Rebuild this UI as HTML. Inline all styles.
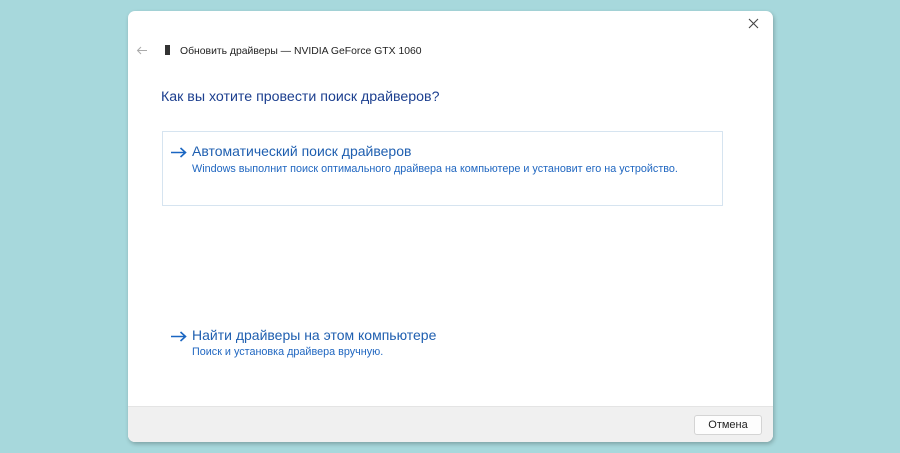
<!DOCTYPE html>
<html><head><meta charset="utf-8"><style>
*{margin:0;padding:0;box-sizing:border-box}
body{width:900px;height:453px;background:#a7d8dc;position:relative;overflow:hidden;font-family:"Liberation Sans","DejaVu Sans",sans-serif}
.dlg{position:absolute;left:128px;top:11px;width:645px;height:431px;background:#fff;border-radius:7px;box-shadow:1px 2px 4px rgba(0,0,0,.25);overflow:hidden}
.foot{position:absolute;left:0;right:0;bottom:0;height:36px;background:#f0f0f0;border-top:1px solid #e4e4e4}
.btn{position:absolute;left:566px;top:8px;width:68px;height:20px;background:#fdfdfd;border:1px solid #d4d4d4;border-radius:3px;font-size:11px;color:#222;text-align:center;line-height:18px}
.t{position:absolute;white-space:nowrap}
.box{position:absolute;left:34px;top:120px;width:561px;height:75px;border:1px solid #d6e4f0}
</style></head><body>
<div class="dlg">
<svg class="t" style="left:620px;top:7px" width="11" height="11" viewBox="0 0 11 11"><path d="M1 1L10 10M10 1L1 10" stroke="#444" stroke-width="1.1"/></svg>
<svg class="t" style="left:8px;top:35px" width="12" height="9" viewBox="0 0 12 9"><path d="M11 4.5H1.5M5 1L1.5 4.5L5 8" stroke="#aaa" stroke-width="1" fill="none"/></svg>
<div class="t" style="left:37px;top:34px;width:5px;height:10px;background:#333"></div>
<div class="t" style="left:52px;top:35px;font-size:10.4px;color:#222">Обновить драйверы — NVIDIA GeForce GTX 1060</div>
<div class="t" style="left:33px;top:78px;font-size:14.2px;color:#1c3f8f">Как вы хотите провести поиск драйверов?</div>
<div class="box"></div>
<svg class="t" style="left:42px;top:136px" width="17" height="11" viewBox="0 0 17 11"><path d="M1 5.5H15.5M10.5 1L15.5 5.5L10.5 10" stroke="#1a66c2" stroke-width="1.6" fill="none"/></svg>
<div class="t" style="left:64px;top:132px;font-size:14px;color:#1f5fb0">Автоматический поиск драйверов</div>
<div class="t" style="left:64px;top:152px;font-size:10.8px;color:#1f66c0">Windows выполнит поиск оптимального драйвера на компьютере и установит его на устройство.</div>
<svg class="t" style="left:42px;top:320px" width="17" height="11" viewBox="0 0 17 11"><path d="M1 5.5H15.5M10.5 1L15.5 5.5L10.5 10" stroke="#1a66c2" stroke-width="1.6" fill="none"/></svg>
<div class="t" style="left:64px;top:316px;font-size:14px;color:#1f5fb0">Найти драйверы на этом компьютере</div>
<div class="t" style="left:64px;top:335px;font-size:10.8px;color:#1f66c0">Поиск и установка драйвера вручную.</div>
<div class="foot"><div class="btn">Отмена</div></div>
</div>
</body></html>
